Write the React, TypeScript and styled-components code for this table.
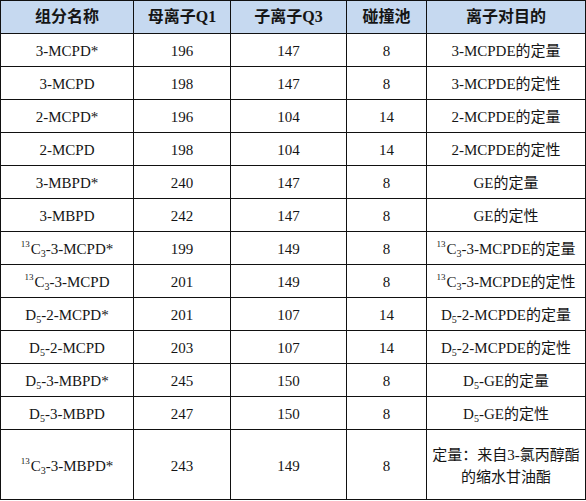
import React from "react";
import styled, { createGlobalStyle } from "styled-components";

const Global = createGlobalStyle`
  html, body { margin: 0; padding: 0; background: #fff; }
  body { font-family: "Liberation Serif", "Noto Sans CJK SC", serif; color: #151515; }
`;

const Table = styled.table`
  border-collapse: collapse;
  table-layout: fixed;
  width: 585px;
  font-family: "Liberation Serif", "Noto Sans CJK SC", serif;
  font-size: 15px;
`;

const Th = styled.th`
  background: #c6d9f0;
  border: 1px solid #111;
  height: 32px;
  padding: 0;
  font-weight: bold;
  font-size: 16px;
  text-align: center;
  vertical-align: middle;
  line-height: 1;
  box-sizing: content-box;
`;

const Td = styled.td<{ $tall?: boolean }>`
  border: 1px solid #111;
  height: ${(p) => (p.$tall ? "66px" : "29px")};
  padding: 3px 0 0;
  text-align: center;
  vertical-align: middle;
  line-height: ${(p) => (p.$tall ? "22px" : "1")};
  box-sizing: content-box;
`;

const Sup = styled.sup`
  font-size: 9px;
  vertical-align: 7px;
  line-height: 0;
  margin-right: 1px;
`;

const Sub = styled.sub`
  font-size: 10px;
  vertical-align: -3px;
  line-height: 0;
`;

type Row = {
  name: React.ReactNode;
  q1: string;
  q3: string;
  ce: string;
  goal: React.ReactNode;
  tall?: boolean;
};

const C13 = () => (
  <>
    <Sup>13</Sup>C<Sub>3</Sub>
  </>
);
const D5 = () => (
  <>
    D<Sub>5</Sub>
  </>
);

const rows: Row[] = [
  { name: "3-MCPD*", q1: "196", q3: "147", ce: "8", goal: "3-MCPDE的定量" },
  { name: "3-MCPD", q1: "198", q3: "147", ce: "8", goal: "3-MCPDE的定性" },
  { name: "2-MCPD*", q1: "196", q3: "104", ce: "14", goal: "2-MCPDE的定量" },
  { name: "2-MCPD", q1: "198", q3: "104", ce: "14", goal: "2-MCPDE的定性" },
  { name: "3-MBPD*", q1: "240", q3: "147", ce: "8", goal: "GE的定量" },
  { name: "3-MBPD", q1: "242", q3: "147", ce: "8", goal: "GE的定性" },
  { name: <><C13 />-3-MCPD*</>, q1: "199", q3: "149", ce: "8", goal: <><C13 />-3-MCPDE的定量</> },
  { name: <><C13 />-3-MCPD</>, q1: "201", q3: "149", ce: "8", goal: <><C13 />-3-MCPDE的定性</> },
  { name: <><D5 />-2-MCPD*</>, q1: "201", q3: "107", ce: "14", goal: <><D5 />-2-MCPDE的定量</> },
  { name: <><D5 />-2-MCPD</>, q1: "203", q3: "107", ce: "14", goal: <><D5 />-2-MCPDE的定性</> },
  { name: <><D5 />-3-MBPD*</>, q1: "245", q3: "150", ce: "8", goal: <><D5 />-GE的定量</> },
  { name: <><D5 />-3-MBPD</>, q1: "247", q3: "150", ce: "8", goal: <><D5 />-GE的定性</> },
  {
    name: <><C13 />-3-MBPD*</>,
    q1: "243",
    q3: "149",
    ce: "8",
    goal: <>定量：来自3-氯丙醇酯<br />的缩水甘油酯</>,
    tall: true,
  },
];

export default function App() {
  return (
    <>
      <Global />
      <Table>
        <colgroup>
          <col style={{ width: 133 }} />
          <col style={{ width: 97 }} />
          <col style={{ width: 116 }} />
          <col style={{ width: 80 }} />
          <col style={{ width: 159 }} />
        </colgroup>
        <thead>
          <tr>
            <Th>组分名称</Th>
            <Th>母离子Q1</Th>
            <Th>子离子Q3</Th>
            <Th>碰撞池</Th>
            <Th>离子对目的</Th>
          </tr>
        </thead>
        <tbody>
          {rows.map((r, i) => (
            <tr key={i}>
              <Td $tall={r.tall}>{r.name}</Td>
              <Td $tall={r.tall}>{r.q1}</Td>
              <Td $tall={r.tall}>{r.q3}</Td>
              <Td $tall={r.tall}>{r.ce}</Td>
              <Td $tall={r.tall}>{r.goal}</Td>
            </tr>
          ))}
        </tbody>
      </Table>
    </>
  );
}
